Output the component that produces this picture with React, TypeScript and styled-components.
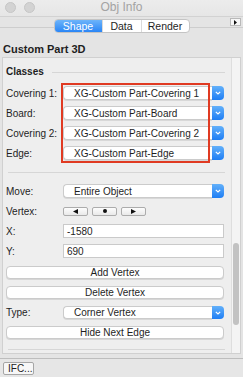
import * as React from 'react';
import styled, { createGlobalStyle } from 'styled-components';

const GlobalStyle = createGlobalStyle`
  html, body {
    margin: 0;
    padding: 0;
    background: #e4e4e4;
  }
  * {
    box-sizing: border-box;
  }
`;

const Window = styled.div`
  width: 243px;
  height: 377px;
  display: flex;
  flex-direction: column;
  background: #e4e4e4;
  font-family: 'Liberation Sans', Arial, sans-serif;
  font-size: 10px;
  color: #1e1e1e;
  overflow: hidden;
`;

const TitleBar = styled.div`
  height: 17px;
  display: grid;
  grid-template-columns: 1fr auto 1fr;
  align-items: center;
  background: linear-gradient(#ececec, #e6e6e6);
  border-bottom: 1px solid #d2d2d2;
`;

const Lights = styled.div`
  display: flex;
  gap: 8px;
  padding-left: 5px;
  margin-top: -2px;
`;

const Light = styled.span`
  width: 11px;
  height: 11px;
  border-radius: 50%;
  background: #d3d3d3;
  border: 1px solid #c6c6c6;
`;

const Title = styled.div`
  font-size: 12px;
  color: #a3a3a3;
  margin-top: -2px;
`;

const TabStrip = styled.div`
  display: grid;
  grid-template-columns: 1fr auto 1fr;
  padding-top: 2px;
  background: linear-gradient(
    to bottom,
    transparent 10px,
    #cdcdcd 10px,
    #cdcdcd 11px,
    transparent 11px
  );
`;

const Tabs = styled.div`
  grid-column: 2;
  display: flex;
  height: 14px;
  border: 1px solid #c4c4c4;
  border-radius: 4px;
  background: #fff;
  overflow: hidden;
`;

const Tab = styled.div<{ $active?: boolean; $w: number }>`
  width: ${(p) => p.$w}px;
  display: flex;
  align-items: center;
  justify-content: center;
  font-size: 10.5px;
  color: ${(p) => (p.$active ? '#fff' : '#1e1e1e')};
  background: ${(p) =>
    p.$active ? 'linear-gradient(#6db4fa, #2a86f6)' : 'transparent'};
  & + & {
    border-left: 1px solid #dadada;
  }
`;

const CornerButton = styled.div`
  grid-column: 3;
  justify-self: end;
  align-self: start;
  width: 11px;
  height: 8px;
  margin-right: 2px;
  margin-top: -1px;
  border: 1px solid #b9b9b9;
  background: #f6f6f6;
  display: flex;
  align-items: center;
  justify-content: center;
`;

const ObjectName = styled.div`
  height: 24px;
  padding: 10px 0 0 3px;
  font-size: 11px;
  font-weight: bold;
  line-height: 13px;
`;

const Panel = styled.div`
  height: 297px;
  margin: 0 2px;
  display: flex;
  background: #eeeeee;
  border: 1px solid #d0d0d0;
`;

const Content = styled.div`
  flex: 1;
  display: flex;
  flex-direction: column;
  padding: 8px 7px 2px 3px;
`;

const Scroller = styled.div`
  width: 9px;
  border-left: 1px solid #dedede;
  background: #f4f4f4;
  padding: 185px 1px 0 1px;
`;

const Thumb = styled.div`
  height: 82px;
  border-radius: 3px;
  background: #c2c2c2;
`;

const Heading = styled.div`
  display: flex;
  align-items: center;
  gap: 8px;
  height: 12px;
  line-height: 12px;
  font-weight: bold;
  &::after {
    content: '';
    flex: 1;
    height: 1px;
    margin-right: -1px;
    background: #d6d6d6;
  }
`;

const Group = styled.div<{ $gap: number; $top: number }>`
  position: relative;
  display: flex;
  flex-direction: column;
  gap: ${(p) => p.$gap}px;
  margin-top: ${(p) => p.$top}px;
`;

const Highlight = styled.div`
  position: absolute;
  top: -3px;
  bottom: -3px;
  left: 55px;
  right: 14px;
  border: 2px solid #e03a22;
  pointer-events: none;
`;

const Row = styled.div<{ $h: number }>`
  display: grid;
  grid-template-columns: 57px 1fr;
  align-items: center;
  height: ${(p) => p.$h}px;
`;

const Label = styled.span`
  white-space: nowrap;
`;

const Popup = styled.div`
  display: flex;
  height: 100%;
`;

const PopupBody = styled.div`
  flex: 1;
  display: flex;
  align-items: center;
  padding-left: 10px;
  background: #fff;
  border: 1px solid #cbcbcb;
  border-right: none;
  border-radius: 4px 0 0 4px;
  box-shadow: 0 1px 0 #d8d8d8;
  white-space: nowrap;
`;

const PopupArrow = styled.div`
  width: 12px;
  display: flex;
  align-items: center;
  justify-content: center;
  border-radius: 0 4px 4px 0;
  background: linear-gradient(#62b0fa, #1f7ef4);
`;

const Rule = styled.div<{ $top: number }>`
  height: 1px;
  margin: ${(p) => p.$top}px -1px 0 2px;
  background: #d6d6d6;
`;

const Steppers = styled.div`
  display: flex;
  gap: 4px;
`;

const Stepper = styled.div`
  width: 25px;
  height: 9px;
  display: flex;
  align-items: center;
  justify-content: center;
  border: 1px solid #acacac;
  border-radius: 2px;
  background: linear-gradient(#fdfdfd, #e9e9e9);
`;

const Field = styled.div`
  height: 100%;
  display: flex;
  align-items: center;
  padding-left: 3px;
  background: #fff;
  border: 1px solid #cacaca;
`;

const PushButton = styled.div`
  height: 13px;
  display: flex;
  align-items: center;
  justify-content: center;
  background: #fff;
  border: 1px solid #cbcbcb;
  border-radius: 4px;
  box-shadow: 0 1px 0 #d6d6d6;
`;

const Gap = styled.div`
  height: 4px;
`;

const BottomBar = styled.div`
  flex: 1;
  border-top: 1px solid #bdbdbd;
  background: #e6e6e6;
  padding: 3px 0 0 3px;
`;

const SmallButton = styled.div`
  width: 31px;
  height: 13px;
  display: flex;
  align-items: center;
  padding-left: 4px;
  border: 1px solid #a6a6a6;
  border-radius: 2px;
  background: #f7f7f7;
`;

const Chevron = () => (
  <svg width="6" height="4" viewBox="0 0 6 4">
    <polyline points="0.8,0.8 3,3 5.2,0.8" fill="none" stroke="#fff" strokeWidth="1.2" />
  </svg>
);

const PopupButton = ({ value }: { value: string }) => (
  <Popup>
    <PopupBody>{value}</PopupBody>
    <PopupArrow>
      <Chevron />
    </PopupArrow>
  </Popup>
);

const classes: [string, string][] = [
  ['Covering 1:', 'XG-Custom Part-Covering 1'],
  ['Board:', 'XG-Custom Part-Board'],
  ['Covering 2:', 'XG-Custom Part-Covering 2'],
  ['Edge:', 'XG-Custom Part-Edge'],
];

export default function App() {
  return (
    <Window>
      <GlobalStyle />
      <TitleBar>
        <Lights>
          <Light />
          <Light />
        </Lights>
        <Title>Obj Info</Title>
      </TitleBar>
      <TabStrip>
        <Tabs>
          <Tab $active $w={47}>Shape</Tab>
          <Tab $w={39}>Data</Tab>
          <Tab $w={48}>Render</Tab>
        </Tabs>
        <CornerButton>
          <svg width="3" height="5" viewBox="0 0 3 5">
            <polygon points="0,0 3,2.5 0,5" fill="#111" />
          </svg>
        </CornerButton>
      </TabStrip>
      <ObjectName>Custom Part 3D</ObjectName>
      <Panel>
        <Content>
          <Heading>Classes</Heading>
          <Group $gap={6} $top={8}>
            {classes.map(([label, value]) => (
              <Row $h={14} key={label}>
                <Label>{label}</Label>
                <PopupButton value={value} />
              </Row>
            ))}
            <Highlight />
          </Group>
          <Rule $top={12} />
          <Group $gap={6} $top={11}>
            <Row $h={14}>
              <Label>Move:</Label>
              <PopupButton value="Entire Object" />
            </Row>
            <Row $h={14}>
              <Label>Vertex:</Label>
              <Steppers>
                <Stepper>
                  <svg width="5" height="5" viewBox="0 0 5 5">
                    <polygon points="5,0 0,2.5 5,5" fill="#111" />
                  </svg>
                </Stepper>
                <Stepper>
                  <svg width="4" height="4" viewBox="0 0 4 4">
                    <circle cx="2" cy="2" r="2" fill="#111" />
                  </svg>
                </Stepper>
                <Stepper>
                  <svg width="5" height="5" viewBox="0 0 5 5">
                    <polygon points="0,0 5,2.5 0,5" fill="#111" />
                  </svg>
                </Stepper>
              </Steppers>
            </Row>
            <Row $h={14}>
              <Label>X:</Label>
              <Field>-1580</Field>
            </Row>
            <Row $h={14}>
              <Label>Y:</Label>
              <Field>690</Field>
            </Row>
          </Group>
          <Group $gap={7} $top={8}>
            <PushButton>Add Vertex</PushButton>
            <PushButton>Delete Vertex</PushButton>
            <Row $h={13}>
              <Label>Type:</Label>
              <PopupButton value="Corner Vertex" />
            </Row>
            <PushButton>Hide Next Edge</PushButton>
          </Group>
          <Rule $top={10} />
        </Content>
        <Scroller>
          <Thumb />
        </Scroller>
      </Panel>
      <Gap />
      <BottomBar>
        <SmallButton>IFC...</SmallButton>
      </BottomBar>
    </Window>
  );
}
